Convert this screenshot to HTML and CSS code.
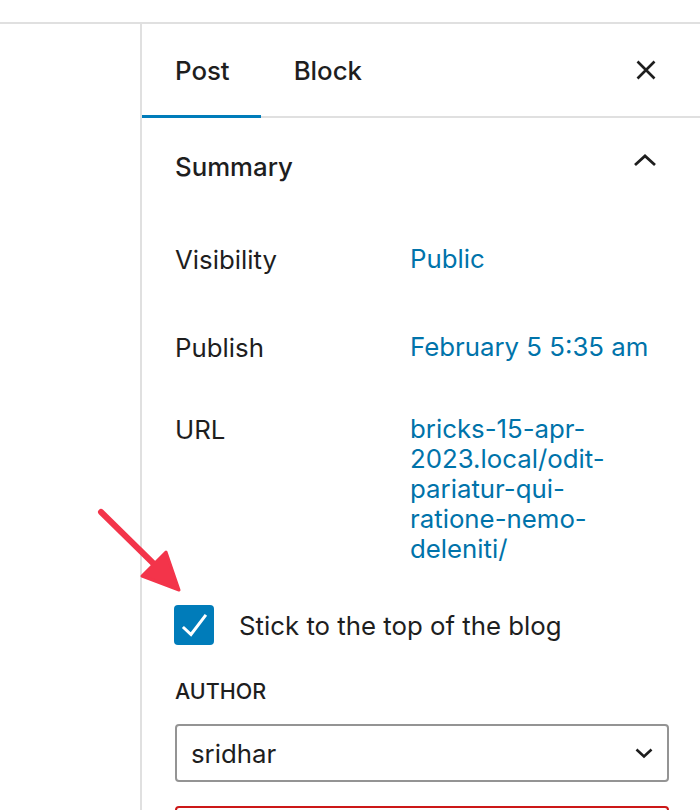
FILE: index.html
```html
<!DOCTYPE html>
<html>
<head>
<meta charset="utf-8">
<link rel="stylesheet" href="styles.css">
</head>
<body>
<div class="topbar"></div>
<div class="main">
  <div class="canvas"></div>
  <aside class="sidebar">
    <div class="tabs">
      <div class="tab active">Post</div>
      <div class="tab">Block</div>
      <div class="close">
        <svg width="24" height="24" viewBox="0 0 24 24"><path d="M3.5 3.5 L20.5 20.5 M20.5 3.5 L3.5 20.5" stroke="#1e1e1e" stroke-width="2.6" fill="none"/></svg>
      </div>
    </div>
    <div class="panel">
      <div class="panel-title">
        <span>Summary</span>
        <svg class="chev" width="24" height="16" viewBox="0 0 24 16"><path d="M2 12 L12 3 L22 12" stroke="#1e1e1e" stroke-width="2.8" fill="none"/></svg>
      </div>
      <div class="rows">
        <div class="row">
          <div class="label">Visibility</div>
          <div class="value">Public</div>
        </div>
        <div class="row">
          <div class="label">Publish</div>
          <div class="value">February 5 5:35 am</div>
        </div>
        <div class="row url">
          <div class="label">URL</div>
          <div class="value">bricks-15-apr-<br>2023.local/odit-<br>pariatur-qui-<br>ratione-nemo-<br>deleniti/</div>
        </div>
      </div>
      <div class="check-row">
        <div class="checkbox">
          <svg width="40" height="40" viewBox="0 0 40 40"><path d="M10 23 L17 29.5 L31 11" stroke="#fff" stroke-width="3" fill="none" stroke-linecap="square"/></svg>
        </div>
        <span class="check-label">Stick to the top of the blog</span>
      </div>
      <div class="field-label">AUTHOR</div>
      <div class="select">
        <span>sridhar</span>
        <svg width="20" height="12" viewBox="0 0 20 12"><path d="M2.5 2.5 L10 9.5 L17.5 2.5" stroke="#1e1e1e" stroke-width="2.6" fill="none"/></svg>
      </div>
      <div class="red-box"></div>
    </div>
  </aside>
</div>
<svg class="arrow" width="700" height="810" viewBox="0 0 700 810">
  <line x1="101" y1="512" x2="158" y2="568" stroke="#f3344a" stroke-width="6" stroke-linecap="round"/>
  <polygon points="179,590 142,576 166,552" fill="#f3344a" stroke="#f3344a" stroke-width="3" stroke-linejoin="round"/>
</svg>
</body>
</html>
```

FILE: styles.css
```css
html, body {
  margin: 0;
  padding: 0;
  background: #fff;
}
body {
  width: 700px;
  height: 810px;
  overflow: hidden;
  position: relative;
  font-family: Inter, "Noto Sans", "Liberation Sans", sans-serif;
  color: #1e1e1e;
  font-size: 25.8px;
}
.topbar {
  height: 22px;
  border-bottom: 2px solid #e0e0e0;
}
.main {
  display: flex;
  height: 786px;
}
.canvas {
  width: 140px;
  flex: none;
}
.sidebar {
  flex: 1;
  border-left: 2px solid #e0e0e0;
  overflow: hidden;
}
.tabs {
  height: 92px;
  border-bottom: 2px solid #e0e0e0;
  display: flex;
  align-items: stretch;
}
.tab {
  display: flex;
  align-items: center;
  padding: 0 31px 0 33px;
  font-weight: 500;
  box-sizing: border-box;
  position: relative;
}
.tab.active::after {
  content: "";
  position: absolute;
  left: 0;
  right: 0;
  bottom: -2px;
  height: 3px;
  background: #007cba;
}
.close {
  margin-left: auto;
  margin-right: 42px;
  display: flex;
  align-items: center;
}
.panel {
  padding: 0 31px 0 33px;
}
.panel-title {
  height: 96px;
  display: flex;
  align-items: center;
  justify-content: space-between;
  font-weight: 500;
}
.chev {
  margin-right: 12px;
  margin-top: -10px;
}
.rows {
  padding-top: 9px;
  display: flex;
  flex-direction: column;
  gap: 16px;
}
.row {
  display: flex;
  height: 72px;
  align-items: center;
}
.row .label {
  width: 235px;
  flex: none;
}
.row .value {
  color: #0073aa;
  line-height: 30px;
}
.row.url {
  height: auto;
  align-items: flex-start;
  padding-top: 15px;
}
.check-row {
  margin-top: 41px;
  display: flex;
  align-items: center;
  height: 40px;
}
.checkbox {
  width: 40px;
  height: 40px;
  background: #007cba;
  border-radius: 4px;
  margin-left: -1px;
  flex: none;
}
.checkbox svg {
  display: block;
}
.check-label {
  margin-left: 25px;
}
.field-label {
  margin-top: 34px;
  line-height: 24px;
  font-size: 21.5px;
  font-weight: 500;
}
.select {
  margin-top: 21px;
  height: 58px;
  box-sizing: border-box;
  border: 2px solid #949494;
  border-radius: 4px;
  display: flex;
  align-items: center;
  justify-content: space-between;
  padding: 0 13px 0 14px;
}
.select svg {
  display: block;
}
.red-box {
  margin-top: 24px;
  height: 60px;
  border: 2px solid #cc1818;
  border-radius: 4px;
}
.arrow {
  position: absolute;
  left: 0;
  top: 0;
  pointer-events: none;
}
```
